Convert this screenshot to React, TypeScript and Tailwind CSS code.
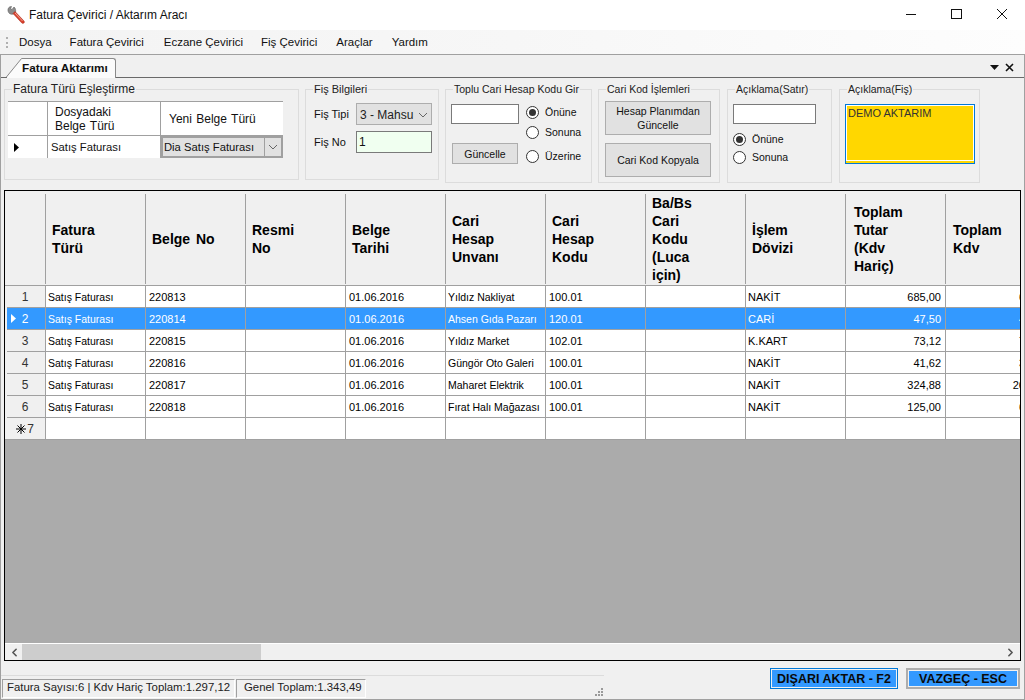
import { ChevronLeft, ChevronRight } from 'lucide-react';

const columns = [
  { title: 'Fatura Türü', lines: ['Fatura', 'Türü'], pad: 'pl-[6px]' },
  { title: 'Belge No', lines: ['Belge No'], pad: 'pl-[6px]' },
  { title: 'Resmi No', lines: ['Resmi', 'No'], pad: 'pl-[6px]' },
  { title: 'Belge Tarihi', lines: ['Belge', 'Tarihi'], pad: 'pl-[6px]' },
  { title: 'Cari Hesap Unvanı', lines: ['Cari', 'Hesap', 'Unvanı'], pad: 'pl-[6px]' },
  { title: 'Cari Hesap Kodu', lines: ['Cari', 'Hesap', 'Kodu'], pad: 'pl-[6px]' },
  { title: 'Ba/Bs', lines: ['Ba/Bs', 'Cari', 'Kodu', '(Luca', 'için)'], pad: 'pl-[6px]' },
  { title: 'İşlem Dövizi', lines: ['İşlem', 'Dövizi'], pad: 'pl-[6px]' },
  { title: 'Toplam Tutar', lines: ['Toplam', 'Tutar', '(Kdv', 'Hariç)'], pad: 'pl-[8px]' },
  { title: 'Toplam Kdv', lines: ['Toplam', 'Kdv'], pad: 'pl-[7px]' },
];

const rows = [
  { no: '220813', name: 'Yıldız Nakliyat', code: '100.01', cur: 'NAKİT', total: '685,00', kdv: '6' },
  { no: '220814', name: 'Ahsen Gıda Pazarı', code: '120.01', cur: 'CARİ', total: '47,50', kdv: '4' },
  { no: '220815', name: 'Yıldız Market', code: '102.01', cur: 'K.KART', total: '73,12', kdv: '7' },
  { no: '220816', name: 'Güngör Oto Galeri', code: '100.01', cur: 'NAKİT', total: '41,62', kdv: '3' },
  { no: '220817', name: 'Maharet Elektrik', code: '100.01', cur: 'NAKİT', total: '324,88', kdv: '26' },
  { no: '220818', name: 'Fırat Halı Mağazası', code: '100.01', cur: 'NAKİT', total: '125,00', kdv: '6' },
];

const GroupBox = ({ title, className, titleClass, children }: { title: string; className: string; titleClass: string; children: React.ReactNode }) => (
  <fieldset className={`border border-[#dcdcdc] shrink-0 ${className}`}>
    <legend className={`ml-[7px] px-[1px] h-[14px] leading-[14px] text-[#222] whitespace-nowrap ${titleClass}`}>{title}</legend>
    {children}
  </fieldset>
);

const Radio = ({ label, checked, className }: { label: string; checked?: boolean; className?: string }) => (
  <div className={`flex items-center h-[13px] ${className ?? ''}`}>
    <span className="w-[13px] h-[13px] rounded-full border border-[#333] bg-white flex items-center justify-center shrink-0">
      {checked && <span className="w-[7px] h-[7px] rounded-full bg-[#333]" />}
    </span>
    <span className="ml-[6px] text-[10.5px] text-[#111] whitespace-nowrap">{label}</span>
  </div>
);

const Arrow = () => (
  <svg width="10" height="6" viewBox="0 0 10 6" fill="none" stroke="#666" strokeWidth="1">
    <path d="M1 1l4 4 4-4" />
  </svg>
);

const GrayButton = ({ label, className }: { label: React.ReactNode; className: string }) => (
  <div className={`bg-[#e1e1e1] border border-[#adadad] flex items-center justify-center text-center text-[10.5px] leading-[14px] text-[#111] ${className}`}>
    {label}
  </div>
);

const WrenchIcon = () => (
  <svg width="18" height="18" viewBox="0 0 18 18" className="shrink-0">
    <path d="M4.5 0.5C2 .5.5 2.5 1 5c.5 2.5 3 4 5.5 3L8.5 6.5C9 4.5 8.5 2 7 1L5 3.5 3.5 3 4.5.5z" fill="#8c8c8c" stroke="#5f5f5f" strokeWidth=".6" />
    <path d="M6 7.5L8 5.5l9 9.5c.6.8.4 1.6-.2 2.1-.6.5-1.4.4-2-.1z" fill="#d8402c" stroke="#a8281a" strokeWidth=".5" />
    <path d="M8 7l7.5 8" stroke="#f3a08e" strokeWidth="1" />
  </svg>
);

const DataGrid = () => (
  <div className="mx-[3px] mt-[7px] h-[472px] border border-black flex flex-col overflow-hidden bg-[#ababab]">
    <div className="flex h-[95px] shrink-0 bg-[#f0f0f0] border-b border-[#a0a0a0]">
      <div className="w-[41px] shrink-0 mt-[3px] mb-[1px] border-r border-[#a0a0a0]" />
      {columns.map(c => (
        <div key={c.title} className={`w-[100px] shrink-0 mt-[3px] mb-[1px] ${c.pad} border-r border-[#a0a0a0] flex flex-col justify-center font-bold text-[14px] leading-[18px] [word-spacing:2px] text-black`}>
          {c.lines.map(l => <span key={l}>{l}</span>)}
        </div>
      ))}
    </div>
    {rows.map((r, i) => {
      const selected = i === 1;
      const rowColor = selected ? 'bg-[#3399ff] text-white' : 'bg-white text-black';
      const textCell = 'text-[10.5px] pl-[2px] pt-[2px]';
      const digitCell = 'text-[11px] pl-[3px] pt-[1px]';
      const cells = [
        { v: 'Satış Faturası', c: textCell },
        { v: r.no, c: digitCell },
        { v: '', c: textCell },
        { v: '01.06.2016', c: digitCell },
        { v: r.name, c: textCell },
        { v: r.code, c: digitCell },
        { v: '', c: textCell },
        { v: r.cur, c: 'text-[11px] pl-[2px] pt-[1px]' },
      ];
      return (
        <div key={r.no} className="flex h-[22px] shrink-0">
          <div className="w-[41px] shrink-0 flex border-r border-[#a0a0a0] bg-[#f0f0f0]">
            <div className={`ml-[2px] flex-1 pr-[2px] flex items-center relative justify-center border-b border-[#a0a0a0] text-[12px] ${selected ? 'bg-[#3399ff] text-white' : 'text-[#333]'}`}>
              {selected && (
                <svg width="5" height="9" viewBox="0 0 5 9" className="absolute left-[4px] top-[6px]">
                  <path d="M0 0l5 4.5L0 9z" fill="#fff" />
                </svg>
              )}
              {i + 1}
            </div>
          </div>
          {cells.map((cell, k) => (
            <div key={k} className={`w-[100px] shrink-0 flex items-center border-r border-b border-[#a0a0a0] whitespace-nowrap overflow-hidden ${cell.c} ${rowColor}`}>
              {cell.v}
            </div>
          ))}
          <div className={`w-[100px] shrink-0 pr-[4px] pt-[1px] text-[11px] flex items-center justify-end border-r border-b border-[#a0a0a0] ${rowColor}`}>{r.total}</div>
          <div className={`w-[100px] shrink-0 pt-[1px] text-[11px] flex items-center justify-end border-r border-b border-[#a0a0a0] whitespace-nowrap ${rowColor}`}>
            <span className="mr-[20px]">{r.kdv}</span>
          </div>
        </div>
      );
    })}
    <div className="flex h-[22px] shrink-0">
      <div className="w-[41px] shrink-0 bg-[#f0f0f0] border-r border-b border-[#a0a0a0] flex items-center justify-center text-[12px] text-[#333]">
        <svg width="10" height="10" viewBox="0 0 10 10" className="mr-[1px]" stroke="#000" strokeWidth="1">
          <path d="M5 0v10M0 5h10M1.5 1.5l7 7M8.5 1.5l-7 7" />
        </svg>
        7
      </div>
      {columns.map(c => (
        <div key={c.title} className="w-[100px] shrink-0 bg-white border-r border-b border-[#a0a0a0]" />
      ))}
    </div>
    <div className="flex-1" />
    <div className="h-[17px] shrink-0 bg-[#f0f0f0] border-t border-white flex items-center justify-between">
      <div className="flex items-center h-full">
        <ChevronLeft size={13} strokeWidth={3} className="ml-[3px] text-[#555]" />
        <div className="ml-[1px] w-[239px] h-full bg-[#cdcdcd]" />
      </div>
      <ChevronRight size={13} strokeWidth={3} className="mr-[3px] text-[#555]" />
    </div>
  </div>
);

export default function App() {
  return (
    <div className="w-[1025px] h-[700px] flex flex-col overflow-hidden bg-white font-['Liberation_Sans',sans-serif] text-[12px] text-[#111]">
      <div className="h-[30px] shrink-0 flex items-center bg-white">
        <div className="ml-[7px] mr-[4px]"><WrenchIcon /></div>
        <span className="text-[12px]">Fatura Çevirici / Aktarım Aracı</span>
        <div className="ml-auto flex items-center">
          <svg width="46" height="30" viewBox="0 0 46 30"><path d="M19 14.5h10" stroke="#111" /></svg>
          <svg width="46" height="30" viewBox="0 0 46 30"><rect x="18.5" y="9.5" width="10" height="9" fill="none" stroke="#111" /></svg>
          <svg width="46" height="30" viewBox="0 0 46 30"><path d="M18 9l10 10M28 9L18 19" stroke="#111" /></svg>
        </div>
      </div>

      <div className="h-[24px] shrink-0 pt-[1px] flex items-center bg-gradient-to-r from-[#f3f3f3] via-[#f7f7f7] to-[#fdfdfd] text-[11.5px] text-[#111]">
        <div className="ml-[6px] mr-[7px] w-[2px] h-[11px] border-l-2 border-dotted border-[#b0b0b0]" />
        <span className="ml-[4px]">Dosya</span>
        <span className="ml-[18px]">Fatura Çevirici</span>
        <span className="ml-[20px]">Eczane Çevirici</span>
        <span className="ml-[18px]">Fiş Çevirici</span>
        <span className="ml-[19px]">Araçlar</span>
        <span className="ml-[19px]">Yardım</span>
      </div>

      <div className="flex-1 min-h-0 flex flex-col bg-[#f0f0f0] border border-[#a0a0a0]">
        <div className="h-[23px] shrink-0 flex items-end border-b border-[#696969] relative">
          <svg width="16" height="20" viewBox="0 0 16 20" className="ml-[5px] shrink-0 -mb-[1px]">
            <path d="M1 19L16 1v19H1z" fill="#fbfbfb" />
            <path d="M0 19.5L15.5 .5h1" fill="none" stroke="#8a8a8a" />
          </svg>
          <div className="h-[20px] -mb-[1px] w-[94px] bg-[#fbfbfb] border-t border-r border-[#8a8a8a] rounded-tr-[3px] font-bold text-[11.75px] leading-[17px] whitespace-nowrap">
            Fatura Aktarımı
          </div>
          <div className="ml-auto mr-[10px] mb-[5px] flex items-center gap-[6px]">
            <svg width="9" height="5" viewBox="0 0 9 5"><path d="M0 0h9L4.5 5z" fill="#111" /></svg>
            <svg width="9" height="9" viewBox="0 0 9 9"><path d="M1 1l7 7M8 1L1 8" stroke="#111" strokeWidth="1.6" /></svg>
          </div>
        </div>

        <div className="flex h-[101px] mt-[4px] shrink-0 pl-[3px] gap-[6px] items-start">
          <GroupBox title="Fatura Türü Eşleştirme" className="w-[295px] h-[98px]" titleClass="text-[12px]">
            <div className="ml-[3px] mt-[5px] w-[275px] border-t border-[#a0a0a0] flex flex-col bg-white text-[12px]">
              <div className="flex h-[34px] border-b border-[#a0a0a0]">
                <div className="w-[40px] border-r border-[#a0a0a0]" />
                <div className="w-[113px] pl-[7px] border-r border-[#a0a0a0] leading-[14px] flex flex-col justify-center [word-spacing:1px]">
                  <span>Dosyadaki</span><span>Belge Türü</span>
                </div>
                <div className="flex-1 pl-[8px] flex items-center [word-spacing:1px]">Yeni Belge Türü</div>
              </div>
              <div className="flex h-[22px] text-[11.25px]">
                <div className="w-[40px] border-r border-[#a0a0a0] flex items-center pl-[6px]">
                  <svg width="5" height="9" viewBox="0 0 5 9"><path d="M0 0l5 4.5L0 9z" fill="#000" /></svg>
                </div>
                <div className="w-[113px] pl-[3px] border-r border-[#a0a0a0] flex items-center">Satış Faturası</div>
                <div className="flex-1 bg-[#e1e1e1] border-2 border-[#a0a0a0] flex items-center pl-[1px]">
                  <span className="flex-1">Dia Satış Faturası</span>
                  <div className="w-[17px] h-full border-l border-[#a0a0a0] flex items-center justify-center"><Arrow /></div>
                </div>
              </div>
            </div>
          </GroupBox>

          <GroupBox title="Fiş Bilgileri" className="w-[134px] h-[98px]" titleClass="text-[11px]">
            <div className="ml-[8px] mt-[7px] flex items-center">
              <span className="w-[42px] pt-[1px] text-[11px] text-[#111]">Fiş Tipi</span>
              <div className="w-[76px] h-[22px] pt-[1px] bg-[#e1e1e1] border border-[#adadad] flex items-center pl-[3px] text-[12px] text-[#222]">
                <span className="flex-1">3 - Mahsu</span>
                <span className="mr-[3px]"><Arrow /></span>
              </div>
            </div>
            <div className="ml-[8px] mt-[6px] flex items-center">
              <span className="w-[42px] text-[11px] text-[#111]">Fiş No</span>
              <div className="w-[76px] h-[22px] bg-[#f0fff0] border border-[#7a7a7a] flex items-center pl-[2px] text-[12px]">1</div>
            </div>
          </GroupBox>

          <GroupBox title="Toplu Cari Hesap Kodu Gir" className="w-[147px] h-[101px]" titleClass="text-[10.5px]">
            <div className="flex mt-[8px] ml-[5px]">
              <div className="w-[68px]">
                <div className="w-[68px] h-[20px] bg-white border border-[#7a7a7a]" />
                <GrayButton label="Güncelle" className="ml-[1px] mt-[19px] w-[66px] h-[21px]" />
              </div>
              <div className="ml-[7px] mt-[2px]">
                <Radio label="Önüne" checked />
                <Radio label="Sonuna" className="mt-[7px]" />
                <Radio label="Üzerine" className="mt-[11px]" />
              </div>
            </div>
          </GroupBox>

          <GroupBox title="Cari Kod İşlemleri" className="w-[122px] h-[101px]" titleClass="text-[10.5px]">
            <GrayButton label={<>Hesap Planımdan<br />Güncelle</>} className="ml-[6px] mt-[5px] w-[106px] h-[34px]" />
            <GrayButton label="Cari Kod Kopyala" className="ml-[6px] mt-[8px] w-[106px] h-[34px]" />
          </GroupBox>

          <GroupBox title="Açıklama(Satır)" className="ml-[1px] w-[105px] h-[101px]" titleClass="text-[10.5px]">
            <div className="ml-[5px] mt-[8px] w-[83px] h-[20px] bg-white border border-[#7a7a7a]" />
            <Radio label="Önüne" checked className="ml-[5px] mt-[9px]" />
            <Radio label="Sonuna" className="ml-[5px] mt-[5px]" />
          </GroupBox>

          <GroupBox title="Açıklama(Fiş)" className="ml-[1px] w-[141px] h-[101px]" titleClass="text-[10.5px]">
            <div className="ml-[5px] mt-[8px] w-[130px] h-[60px] bg-[#ffd700] border border-[#0078d7] p-[1px]">
              <div className="h-full border border-white bg-[#ffd700] -m-[1px] px-[1px] text-[11px] leading-[15px] text-[#333]">DEMO AKTARIM</div>
            </div>
          </GroupBox>
        </div>

        <DataGrid />

        <div className="flex-1 flex items-start relative">
          <div className="w-[603px] shrink-0 mt-[14px] border-t border-[#dcdcdc]">
            <div className="mt-[1px] flex items-center">
              <div className="ml-[1px] flex items-stretch h-[19px] text-[11.4px] text-[#222]">
                <div className="w-[233px] pl-[4px] border border-white border-t-[#a0a0a0] border-l-[#a0a0a0] flex items-center whitespace-nowrap">Fatura Sayısı:6 | Kdv Hariç Toplam:1.297,12</div>
                <div className="w-[130px] pl-[7px] ml-[1px] border border-white border-t-[#a0a0a0] border-l-[#a0a0a0] flex items-center whitespace-nowrap">Genel Toplam:1.343,49</div>
              </div>
              <svg width="12" height="12" viewBox="0 0 12 12" className="mt-[10px] ml-auto" fill="#9a9a9a">
                <rect x="9" y="1" width="2" height="2" /><rect x="6" y="4" width="2" height="2" /><rect x="9" y="4" width="2" height="2" />
                <rect x="3" y="7" width="2" height="2" /><rect x="6" y="7" width="2" height="2" /><rect x="9" y="7" width="2" height="2" />
              </svg>
            </div>
          </div>
          <div className="ml-auto mt-[7px] mr-[4px] flex gap-[8px]">
            <div className="w-[128px] h-[21px] border border-[#0078d7] p-[1px] bg-[#f0f0f0]">
              <div className="h-full pt-[1px] bg-[#3399ff] flex items-center justify-center font-bold text-[12.5px] text-[#0a0a0a]">DIŞARI AKTAR - F2</div>
            </div>
            <div className="w-[114px] h-[21px] border-2 border-[#adadad] p-[1px] bg-[#f0f0f0]">
              <div className="h-full pt-[1px] bg-[#3399ff] flex items-center justify-center font-bold text-[12.5px] text-[#0a0a0a]">VAZGEÇ - ESC</div>
            </div>
          </div>
        </div>
      </div>
    </div>
  );
}
